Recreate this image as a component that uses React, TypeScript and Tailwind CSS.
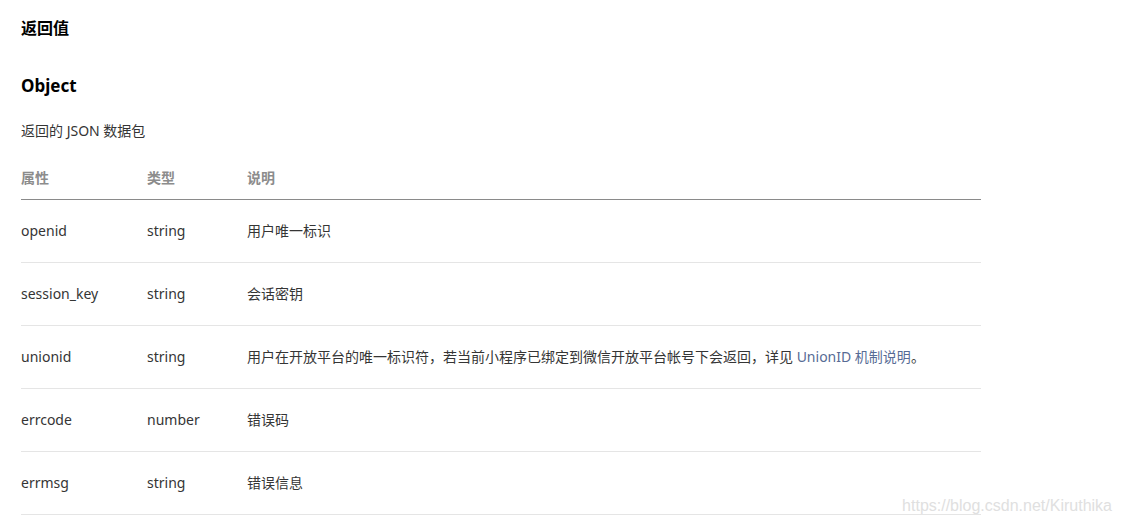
import React from "react";

const rows = [
  { name: "openid", type: "string", desc: <>用户唯一标识</> },
  { name: "session_key", type: "string", desc: <>会话密钥</> },
  {
    name: "unionid",
    type: "string",
    desc: (
      <>
        用户在开放平台的唯一标识符，若当前小程序已绑定到微信开放平台帐号下会返回，详见{" "}
        <a className="text-[#576b95]">UnionID 机制说明</a>。
      </>
    ),
  },
  { name: "errcode", type: "number", desc: <>错误码</> },
  { name: "errmsg", type: "string", desc: <>错误信息</> },
];

export default function App() {
  return (
    <div
      className="relative h-[522px] w-[1122px] overflow-hidden bg-white pl-[21px] text-[#353535]"
      style={{ fontFamily: '"Noto Sans", "Noto Sans CJK SC", sans-serif' }}
    >
      <h3 className="pt-[16px] text-[16px] font-bold leading-[24px] text-black">返回值</h3>
      <h4 className="mt-[34px] text-[17px] font-bold leading-[24px] text-black">Object</h4>
      <p className="mt-[23px] text-[14px] leading-[20px]">返回的 JSON 数据包</p>

      <div className="mt-[27px] w-[960px] text-[14px]">
        <div className="flex border-b border-[#8a8a8a] pb-[11px] font-bold leading-[20px] text-[#8c8c8c]">
          <div className="w-[126px]">属性</div>
          <div className="w-[100px]">类型</div>
          <div>说明</div>
        </div>
        {rows.map((r) => (
          <div key={r.name} className="flex h-[63px] items-center border-b border-[#e5e5e5] leading-[20px]">
            <div className="w-[126px]">{r.name}</div>
            <div className="w-[100px]">{r.type}</div>
            <div>{r.desc}</div>
          </div>
        ))}
      </div>

      <div
        className="absolute right-[10px] top-[494px] text-[16px] text-[#e0e0e0]"
        style={{ fontFamily: '"Liberation Sans", Arial, sans-serif' }}
      >
        https://blog.csdn.net/Kiruthika
      </div>
    </div>
  );
}
